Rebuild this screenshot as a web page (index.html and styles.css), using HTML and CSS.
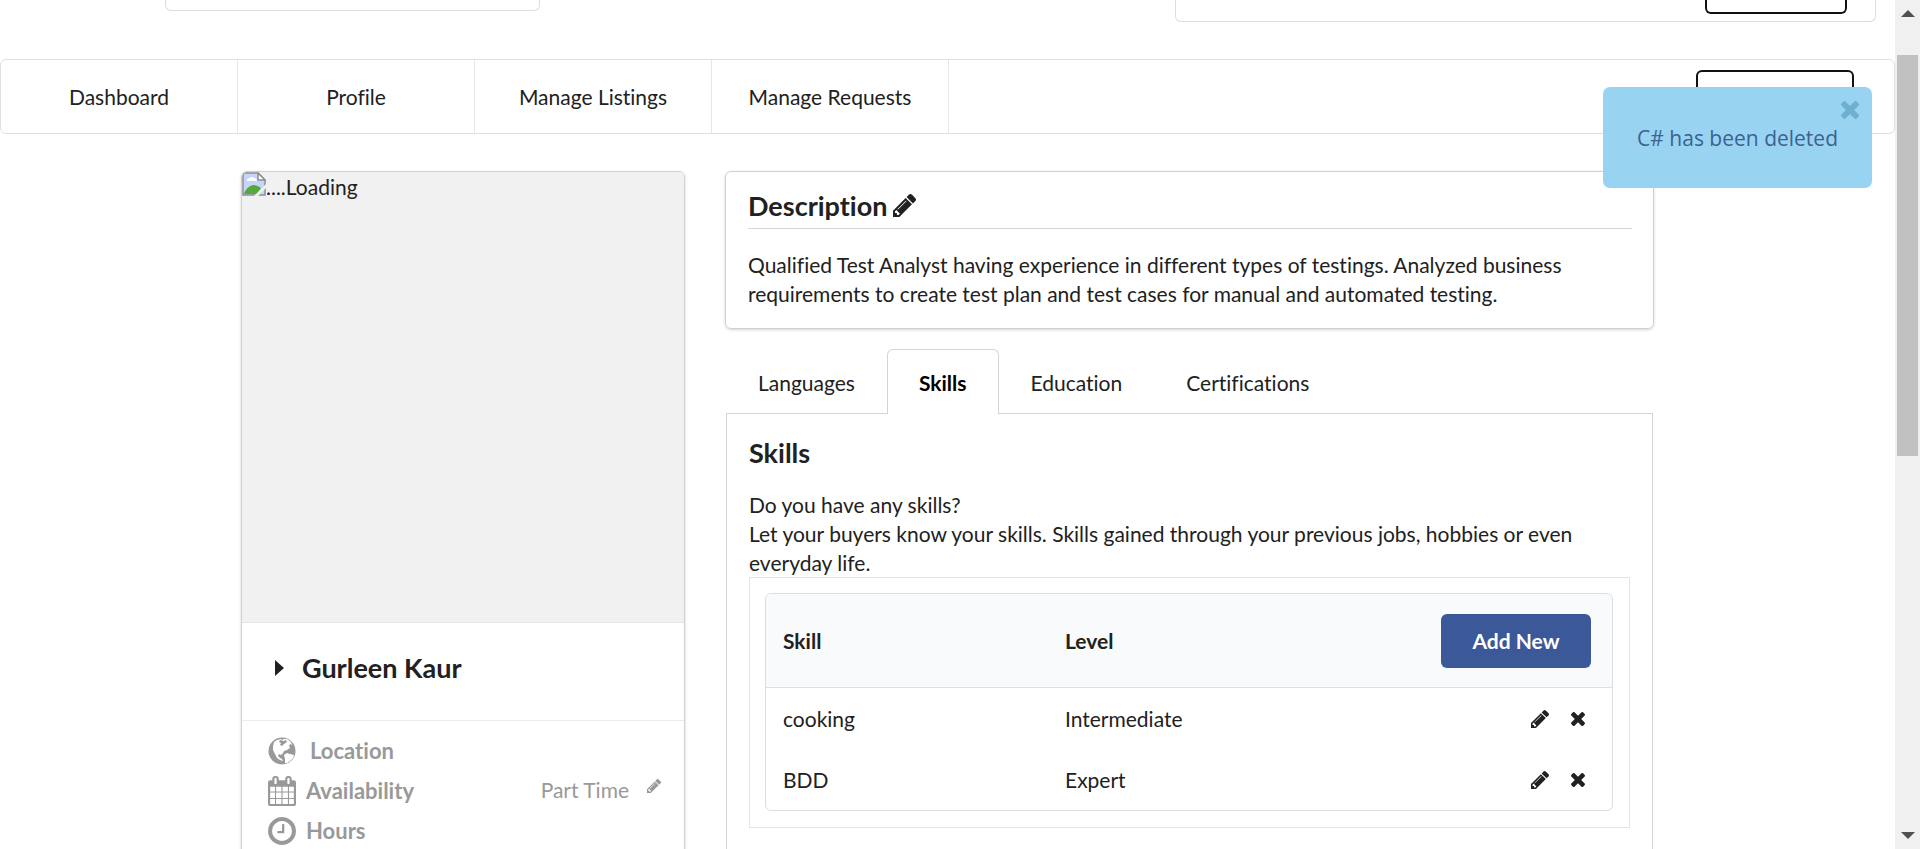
FILE: index.html
```html
<!DOCTYPE html>
<html lang="en">
<head>
<meta charset="utf-8">
<title>Profile</title>
<link rel="stylesheet" href="styles.css">
</head>
<body>
<svg class="sprite" aria-hidden="true">
  <symbol id="pencil" viewBox="128 149 1515 1515"><path d="M491 1536l91-91-235-235-91 91v107h128v128h107zm523-928q0-22-22-22-10 0-17 7l-542 542q-7 7-7 17 0 22 22 22 10 0 17-7l542-542q7-7 7-17zm-54-192l416 416-832 832h-416v-416zm683 96q0 53-37 90l-166 166-416-416 166-165q36-38 90-38 53 0 91 38l235 234q37 39 37 91z"/></symbol>
  <symbol id="times" viewBox="302 366 1188 1188"><path d="M1490 1322q0 40-28 68l-136 136q-28 28-68 28t-68-28l-294-294-294 294q-28 28-68 28t-68-28l-136-136q-28-28-28-68t28-68l294-294-294-294q-28-28-28-68t28-68l136-136q28-28 68-28t68 28l294 294 294-294q28-28 68-28t68 28l136 136q28 28 28 68t-28 68l-294 294 294 294q28 28 28 68z"/></symbol>
</svg>
<div class="page">
  <header class="header">
    <div class="search-box"></div>
    <div class="account-box"><button class="outline-button" type="button" aria-label="Sign out"></button></div>
  </header>

  <nav class="menu">
    <a class="menu-item" href="#">Dashboard</a>
    <a class="menu-item" href="#">Profile</a>
    <a class="menu-item" href="#">Manage Listings</a>
    <a class="menu-item" href="#">Manage Requests</a>
    <button class="outline-button menu-button" type="button" aria-label="Share skill"></button>
  </nav>

  <main class="content">
    <aside class="card profile">
      <div class="photo">
        <svg class="photo-icon" viewBox="0 0 24 24" aria-hidden="true">
          <path d="M1 1h15l7 7v15H1z" fill="#c6d6f7" stroke="#8e8e93" stroke-width="1.5"/>
          <path d="M5 9q0-3 3-3 2-2 4 0 3 0 3 3z" fill="#fff"/>
          <path d="M2 22q2-7 9-9 5 0 8 3l-4 6z" fill="#54a83c"/>
          <path d="M16 1v7h7z" fill="#fff" stroke="#8e8e93" stroke-width="1.5"/>
          <path d="M12 24L24 12v4l-8 8z" fill="#f1f1f1"/>
        </svg><span>....Loading</span>
      </div>
      <h2 class="name">
        <svg class="caret" viewBox="0 0 9 16" aria-hidden="true"><path d="M0 0l9 8-9 8z"/></svg>
        Gurleen Kaur
      </h2>
      <ul class="facts">
        <li class="fact">
          <svg class="fact-icon" viewBox="0 0 28 28" aria-hidden="true">
            <circle cx="14" cy="14" r="13.5"/>
            <path fill="#fff" d="M6 5l3-2 4-1 1 1 2-1 3 0 4 3 1 3-2-1-1 2 1 2-3 2-3 1-1 2-2 2-2-1-1 2 2 2 2 1 1 2-3-1-3-2-2-4-2-4 0-4z"/>
            <path fill="#fff" d="M16 18l3-2 3 1 4 1-1 3-3 3-3 2-2 0 0-4z"/>
            <path d="M12 3l4 1 2-1 1 2-3 2-2 2-2-1 1-2-2-1z"/>
          </svg>
          <span class="fact-label wide">Location</span>
        </li>
        <li class="fact">
          <svg class="fact-icon tall" viewBox="64 0 1664 1792" aria-hidden="true"><path d="M192 1664h288v-288h-288v288zm352 0h320v-288h-320v288zm-352-352h288v-320h-288v320zm352 0h320v-320h-320v320zm-352-384h288v-288h-288v288zm736 736h320v-288h-320v288zm-384-736h320v-288h-320v288zm768 736h288v-288h-288v288zm-384-352h320v-320h-320v320zm-352-864v-288q0-13-9.500-22.500t-22.500-9.500h-64q-13 0-22.500 9.500t-9.500 22.500v288q0 13 9.500 22.500t22.500 9.500h64q13 0 22.500-9.500t9.500-22.500zm736 864h288v-320h-288v320zm-384-384h320v-288h-320v288zm384 0h288v-288h-288v288zm32-480v-288q0-13-9.500-22.500t-22.500-9.500h-64q-13 0-22.500 9.500t-9.500 22.500v288q0 13 9.500 22.500t22.500 9.500h64q13 0 22.500-9.500t9.500-22.500zm384-64v1280q0 52-38 90t-90 38h-1408q-52 0-90-38t-38-90v-1280q0-52 38-90t90-38h128v-96q0-66 47-113t113-47h64q66 0 113 47t47 113v96h384v-96q0-66 47-113t113-47h64q66 0 113 47t47 113v96h128q52 0 90 38t38 90z"/></svg>
          <span class="fact-label">Availability</span>
          <span class="fact-value">Part Time</span>
          <button class="icon-button" type="button" aria-label="Edit availability"><svg class="icon-small"><use href="#pencil"/></svg></button>
        </li>
        <li class="fact">
          <svg class="fact-icon" viewBox="128 128 1536 1536" aria-hidden="true"><path d="M1024 544v448q0 14-9 23t-23 9h-320q-14 0-23-9t-9-23v-64q0-14 9-23t23-9h224v-352q0-14 9-23t23-9h64q14 0 23 9t9 23zm416 352q0-148-73-273t-198-198-273-73-273 73-198 198-73 273 73 273 198 198 273 73 273-73 198-198 73-273zm224 0q0 209-103 385.500t-279.500 279.500-385.500 103-385.500-103-279.500-279.500-103-385.500 103-385.500 279.500-279.500 385.500-103 385.500 103 279.500 279.500 103 385.500z"/></svg>
          <span class="fact-label">Hours</span>
        </li>
      </ul>
    </aside>

    <div class="details">
      <section class="card description">
        <h2 class="title description-title">Description<button class="icon-button" type="button" aria-label="Edit description"><svg class="icon-large"><use href="#pencil"/></svg></button></h2>
        <p class="text">Qualified Test Analyst having experience in different types of testings. Analyzed business requirements to create test plan and test cases for manual and automated testing.</p>
      </section>

      <div class="tabs">
        <a class="tab" href="#">Languages</a>
        <a class="tab active" href="#">Skills</a>
        <a class="tab" href="#">Education</a>
        <a class="tab" href="#">Certifications</a>
      </div>
      <section class="tab-panel">
        <h2 class="title">Skills</h2>
        <p class="text intro">Do you have any skills?<br>Let your buyers know your skills. Skills gained through your previous jobs, hobbies or even everyday life.</p>
        <div class="table-frame">
          <table class="skills">
            <thead>
              <tr><th>Skill</th><th>Level</th><th class="actions"><button class="add-button" type="button">Add New</button></th></tr>
            </thead>
            <tbody>
              <tr><td>cooking</td><td>Intermediate</td><td class="actions"><div class="action-icons">
                <button class="icon-button" type="button" aria-label="Edit cooking"><svg class="icon-medium"><use href="#pencil"/></svg></button>
                <button class="icon-button" type="button" aria-label="Delete cooking"><svg class="icon-small"><use href="#times"/></svg></button></div></td></tr>
              <tr><td>BDD</td><td>Expert</td><td class="actions"><div class="action-icons">
                <button class="icon-button" type="button" aria-label="Edit BDD"><svg class="icon-medium"><use href="#pencil"/></svg></button>
                <button class="icon-button" type="button" aria-label="Delete BDD"><svg class="icon-small"><use href="#times"/></svg></button></div></td></tr>
            </tbody>
          </table>
        </div>
      </section>
    </div>
  </main>

  <div class="toast" role="status">
    C# has been deleted
    <button class="icon-button toast-close" type="button" aria-label="Close"><svg class="icon-medium"><use href="#times"/></svg></button>
  </div>
</div>
<div class="scrollbar" aria-hidden="true">
  <svg class="arrow" viewBox="0 0 14 7"><path d="M7 0l7 7H0z"/></svg>
  <div class="track"><div class="thumb"></div></div>
  <svg class="arrow" viewBox="0 0 14 7"><path d="M0 0h14L7 7z"/></svg>
</div>
</body>
</html>
```
FILE: styles.css
```css
* { box-sizing: border-box; }

body {
  margin: 0;
  display: flex;
  height: 100vh;
  overflow: hidden;
  background: #fff;
  color: #212121;
  font-family: Lato, sans-serif;
  font-size: 21px;
  font-variant-ligatures: none;
  line-height: 29px;
}

h2, p, ul { margin: 0; }
a { color: inherit; text-decoration: none; }
button { font: inherit; cursor: pointer; }
svg { display: block; fill: currentColor; }
.sprite { position: absolute; width: 0; height: 0; }

.page {
  position: relative;
  flex: 1;
  min-width: 0;
  overflow: hidden;
}

/* Header and menu */
.header {
  display: flex;
  align-items: flex-start;
  justify-content: space-between;
  height: 59px;
  padding: 0 19px 0 165px;
}

.search-box, .account-box {
  border: 1px solid #dcdddd;
  border-top: 0;
  border-radius: 0 0 6px 6px;
}
.search-box { width: 375px; height: 11px; }
.account-box {
  display: flex;
  justify-content: flex-end;
  width: 701px;
  height: 22px;
  padding-right: 28px;
}

.outline-button {
  width: 142px;
  height: 14px;
  padding: 0;
  background: #fff;
  border: 2px solid #111;
  border-top: 0;
  border-radius: 0 0 6px 6px;
}

.menu {
  display: flex;
  height: 75px;
  border: 1px solid #dedfdf;
  border-radius: 6px;
}
.menu-item {
  display: flex;
  align-items: center;
  justify-content: center;
  flex: 0 0 237px;
  border-right: 1px solid #e6e6e6;
}
.menu-button {
  width: 158px;
  height: 54px;
  margin: 10px 40px 0 auto;
  border-top: 2px solid #111;
  border-radius: 6px;
}

/* Columns */
.content {
  display: flex;
  align-items: flex-start;
  gap: 40px;
  max-width: 1413px;
  margin: 37px auto 0;
}
.details { flex: 1; min-width: 0; }

.card {
  border: 1px solid #d0d1d1;
  border-radius: 6px;
  box-shadow: 0 1px 3px #d4d4d5;
}

/* Profile */
.profile { flex: 0 0 444px; overflow: hidden; }
.photo {
  display: flex;
  height: 451px;
  background: #f1f1f1;
  border-bottom: 1px solid #e6e6e6;
}
.photo-icon { width: 24px; height: 24px; }
.name {
  display: flex;
  align-items: center;
  gap: 18px;
  height: 98px;
  padding: 0 33px 8px;
  border-bottom: 1px solid #ececec;
  font-size: 27px;
}
.caret { width: 9px; height: 16px; }
.facts {
  padding: 10px 23px 24px 26px;
  list-style: none;
  color: #999;
}
.fact {
  display: flex;
  align-items: center;
  height: 40px;
}
.fact-icon { width: 28px; height: 28px; }
.fact-icon.tall { height: 32px; }
.fact-label { margin-left: 10px; padding-bottom: 2px; font-size: 22px; font-weight: bold; }
.fact-label.wide { margin-left: 14px; }
.fact-value { margin-left: auto; padding-bottom: 4px; }
.fact .icon-button { margin: 0 0 10px 18px; }

.title { font-size: 27px; line-height: 34px; }

/* Description */
.description { padding: 16px 21px 20px 22px; }
.description-title {
  display: flex;
  align-items: center;
  gap: 6px;
  height: 41px;
  padding-bottom: 5px;
  border-bottom: 1px solid #d6d6d6;
}
.description .text { padding-top: 21px; }

.icon-button {
  padding: 0;
  background: none;
  border: 0;
  color: inherit;
}
.icon-small { width: 14px; height: 14px; }
.icon-medium { width: 18px; height: 18px; }
.icon-large { width: 23px; height: 23px; }

/* Tabs */
.tabs {
  display: flex;
  margin: 20px 1px 0;
}
.tab {
  height: 64px;
  padding: 18px 31px;
  border: 1px solid transparent;
  border-bottom: 0;
}
.tab.active {
  z-index: 1;
  height: 65px;
  margin-bottom: -1px;
  background: #fff;
  border-color: #d4d4d5;
  border-radius: 6px 6px 0 0;
  color: #000;
  font-weight: bold;
}
.tab-panel {
  margin: 0 1px;
  padding: 22px;
  border: 1px solid #d4d4d5;
}
.intro { padding-top: 20px; }

/* Skills table */
.table-frame {
  padding: 15px 16px 16px 15px;
  border: 1px solid #e4e4e4;
}
.skills {
  width: 100%;
  table-layout: fixed;
  border: 1px solid #dcddde;
  border-radius: 6px;
  border-collapse: separate;
  border-spacing: 0;
  overflow: hidden;
}
.skills th, .skills td { padding: 0 17px; text-align: left; }
.skills th {
  height: 94px;
  background: #f9fafb;
  border-bottom: 1px solid #dedfdf;
}
.skills td { height: 61px; }
.skills .actions { text-align: right; }
.action-icons {
  display: flex;
  align-items: center;
  justify-content: flex-end;
  gap: 22px;
  padding-right: 10px;
}
.add-button {
  width: 150px;
  height: 54px;
  margin-right: 4px;
  background: #3b5998;
  border: 0;
  border-radius: 6px;
  color: #fff;
  font-weight: bold;
}

/* Notification */
.toast {
  position: absolute;
  top: 87px;
  right: 23px;
  padding: 37px 34px 35px;
  background: #99d3f2;
  border-radius: 7px;
  color: #3c628f;
  font-family: "Open Sans", sans-serif;
  font-size: 21px;
}
.toast-close {
  position: absolute;
  top: 14px;
  right: 13px;
  color: #6fafd0;
}

/* Scrollbar */
.scrollbar {
  display: flex;
  flex-direction: column;
  flex: 0 0 25px;
  align-items: center;
  padding: 10px 2px;
  background: #f0f0f0;
}
.arrow { width: 14px; height: 7px; fill: #505050; }
.track { flex: 1; align-self: stretch; padding-top: 38px; }
.thumb { height: 401px; background: #c1c1c1; }
```
